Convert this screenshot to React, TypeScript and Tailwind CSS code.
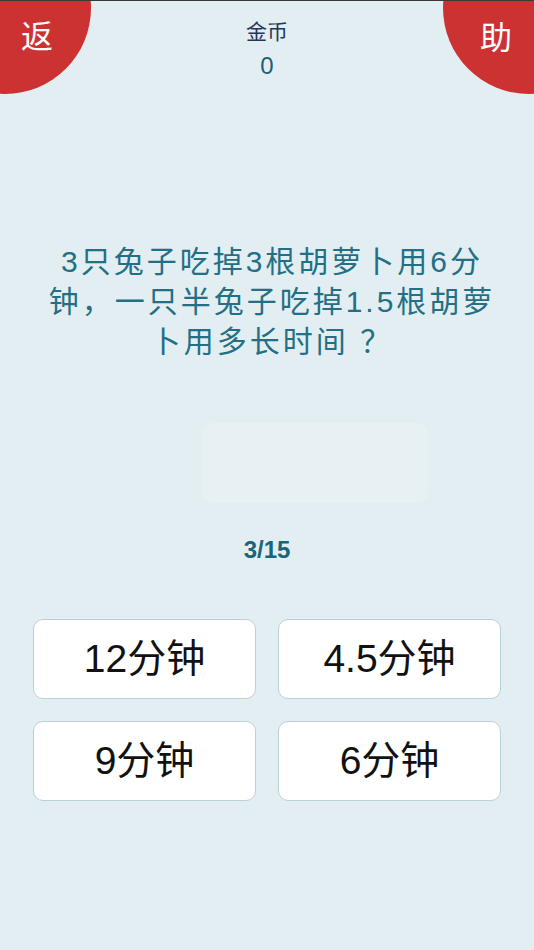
const sans = "font-['Liberation_Sans','Noto_Sans_CJK_SC',sans-serif]";

const answers = ['12分钟', '4.5分钟', '9分钟', '6分钟'];

function Corner({ side, label }: { side: 'left' | 'right'; label: string }) {
  return (
    <div
      className={
        side === 'left'
          ? 'absolute left-[-81px] top-[-78px] h-[172px] w-[172px] rounded-full bg-[#cc3232]'
          : 'absolute right-[-81px] top-[-78px] h-[172px] w-[172px] rounded-full bg-[#cc3232]'
      }
    >
      <span
        className={
          side === 'left'
            ? 'absolute left-[102px] top-[97px] text-[32px] leading-[36px] text-white'
            : 'absolute left-[37px] top-[98px] text-[32px] leading-[36px] text-white'
        }
      >
        {label}
      </span>
    </div>
  );
}

export default function App() {
  return (
    <div className={`relative min-h-[950px] w-full overflow-hidden bg-[#e2eef1] ${sans}`}>
      <div className="absolute inset-x-0 top-0 z-20 h-px bg-[#3a3a3a]" />
      <Corner side="left" label="返" />
      <Corner side="right" label="助" />

      {/* coins */}
      <div className="flex flex-col items-center pt-[18px]">
        <div className="text-[21px] leading-[28px] text-[#25365a]">金币</div>
        <div className="mt-[6px] text-[24px] leading-[28px] text-[#1d5d75]">0</div>
      </div>

      {/* question */}
      <div className="mt-[162px] pl-[10px] text-center text-[30px] leading-[40px] tracking-[3px] text-[#246f85]">
        <div>3只兔子吃掉3根胡萝卜用6分</div>
        <div>钟，一只半兔子吃掉1.5根胡萝</div>
        <div>卜用多长时间 ？</div>
      </div>

      <div className="ml-[202px] mt-[61px] h-[80px] w-[226px] rounded-[10px] bg-white/20" />

      <div className="mt-[33px] text-center text-[24px] font-bold leading-[28px] text-[#1b6479]">3/15</div>

      {/* answers */}
      <div className="mx-auto mt-[55px] grid w-[468px] grid-cols-2 gap-[22px]">
        {answers.map((a) => (
          <button
            key={a}
            className="flex h-[80px] items-center justify-center rounded-[10px] border border-[#bcd0da] bg-white text-[39px] text-[#111]"
          >
            {a}
          </button>
        ))}
      </div>
    </div>
  );
}
